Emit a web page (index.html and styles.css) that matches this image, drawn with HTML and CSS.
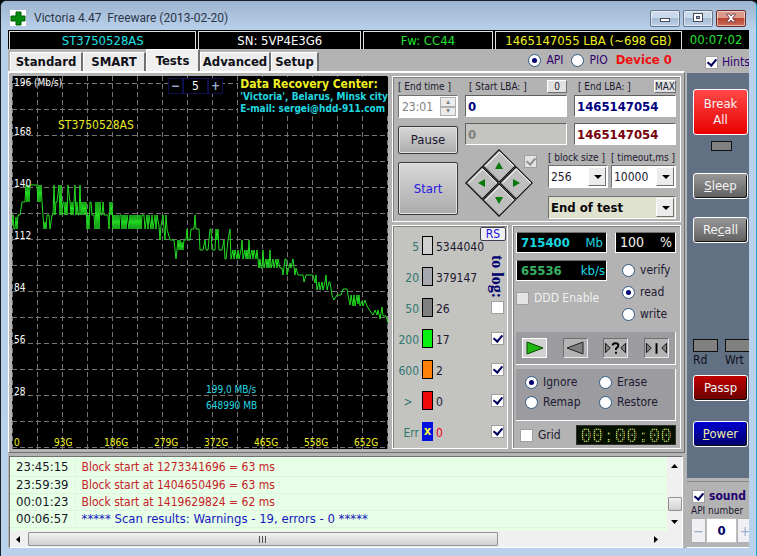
FILE: index.html
```html
<!DOCTYPE html>
<html lang="en">

<head>
    <meta charset="UTF-8">
    <meta name="viewport" content="width=device-width, initial-scale=1.0">
    <title>Victoria 4.47</title>
    <link rel="stylesheet" href="styles.css">
</head>

<body>
    <div class="window">
        <header class="titlebar">
            <svg class="logo" width="16" height="16" viewBox="0 0 16 16">
                <rect width="16" height="16" fill="#fff" />
                <path d="M6 2h5v4h4v5h-4v4H6v-4H1V6h5z" fill="#008a10" stroke="#005c00" />
            </svg>
            <h1>Victoria 4.47&nbsp; Freeware (2013-02-20)</h1>
            <div class="win-buttons">
                <button aria-label="Minimize">
                    <svg width="12" height="12" viewBox="0 0 12 12"><rect x="1.5" y="6.5" width="9" height="3" fill="#fff" stroke="#454a5a" /></svg>
                </button>
                <button aria-label="Maximize">
                    <svg width="12" height="12" viewBox="0 0 12 12"><rect x="1.5" y="1.5" width="9" height="8" fill="#fff" stroke="#454a5a" /><rect x="4.5" y="4.5" width="3" height="2" fill="#a9bdd6" stroke="#454a5a" /></svg>
                </button>
                <button class="close" aria-label="Close">
                    <svg width="12" height="12" viewBox="0 0 12 12"><path d="M1.500 2h3L6 4l1.500-2h3L7.500 6l3 4h-3L6 8l-1.500 2h-3l3-4z" fill="#fff" stroke="#5a3038" stroke-width=".8" /></svg>
                </button>
            </div>
        </header>

        <div class="info">
            <span class="cell cyan">ST3750528AS</span>
            <span class="cell">SN: 5VP4E3G6</span>
            <span class="cell green">Fw: CC44</span>
            <span class="cell yellow">1465147055 LBA (~698 GB)</span>
            <span class="clock">00:07:02</span>
        </div>

        <div class="main">
            <div class="left">
                <div class="tabs-row">
                    <nav class="tabs">
                        <button class="tab tab-standard">Standard</button>
                        <button class="tab tab-smart">SMART</button>
                        <button class="tab tab-tests active">Tests</button>
                        <button class="tab tab-advanced">Advanced</button>
                        <button class="tab tab-setup">Setup</button>
                    </nav>
                    <div class="mode">
                        <label><input type="radio" name="mode" checked>API</label>
                        <label><input type="radio" name="mode">PIO</label>
                        <strong>Device 0</strong>
                    </div>
                </div>

                <div class="page">
                    <section class="graph">
                        <svg class="plot" viewBox="0 0 376 373" preserveAspectRatio="none">
                            <g fill="none" stroke="#747474" stroke-dasharray="5 3">
                                <path d="M.5 0V373M25.500 0V373M50.500 0V373M75.500 0V373M100.500 0V373M125.500 0V373M150.500 0V373M175.500 0V373M200.500 0V373M225.500 0V373M250.500 0V373M275.500 0V373M300.500 0V373M325.500 0V373M350.500 0V373M375.500 0V373" />
                                <path d="M0 7.500H376M0 33.500H376M0 59.500H376M0 85.500H376M0 111.500H376M0 137.500H376M0 163.500H376M0 189.500H376M0 215.500H376M0 241.500H376M0 267.500H376M0 293.500H376M0 319.500H376M0 345.500H376M0 371.500H376" />
                            </g>
                            <polyline fill="none" stroke="#22dd22" points="0,150 1,139 2,153 3,153 4,141 5,153 6,139 8,139 10,126 13,126 14,109 15,126 16,109 17,126 18,109 25,109 26,126 27,109 28,126 29,109 30,126 32,153 33,146 34,153 35,139 37,139 38,153 40,139 41,139 42,109 43,139 44,126 45,126 46,118 47,109 48,139 49,109 50,139 51,126 52,126 53,139 54,126 55,139 56,109 58,126 59,139 60,126 61,139 62,126 63,109 64,139 65,126 66,139 67,139 68,109 69,139 70,126 71,139 72,126 73,139 74,126 75,153 76,139 77,153 78,126 79,126 80,139 82,139 83,153 84,126 85,153 86,126 87,153 88,126 89,139 90,139 91,126 92,139 96,139 97,153 98,126 99,139 100,126 101,153 102,139 103,153 104,139 105,153 106,139 107,153 108,139 109,139 110,153 111,139 112,153 113,139 114,153 115,139 117,153 118,139 119,153 120,139 121,153 122,139 123,153 124,139 125,153 126,139 127,153 128,139 129,153 130,139 132,139 133,153 135,139 136,153 137,139 139,153 140,139 141,153 143,139 144,153 145,139 147,150 148,164 149,150 151,139 152,153 153,164 154,139 155,153 158,164 162,164 164,183 166,164 167,174 168,164 169,174 170,166 171,174 172,164 174,164 175,153 176,164 178,164 179,153 182,153 183,139 184,153 187,153 188,174 191,174 193,164 194,174 196,174 198,153 199,153 200,174 203,174 204,153 205,164 206,153 207,174 210,174 212,164 213,183 214,183 216,164 218,153 219,183 221,174 222,183 223,174 225,183 226,174 227,183 229,174 230,164 231,183 233,174 234,183 235,174 236,183 237,164 238,183 240,174 241,183 242,174 244,183 245,174 247,192 248,183 249,192 250,192 251,174 252,192 254,183 255,192 256,183 257,192 258,174 259,192 261,183 262,192 264,183 265,192 266,183 268,192 270,192 271,199 273,183 274,183 275,199 278,187 279,192 281,183 283,199 284,192 286,199 291,199 292,206 294,199 301,199 303,207 304,199 305,214 307,206 308,214 310,206 311,214 313,206 314,199 315,214 317,206 318,206 320,219 322,224 325,219 329,219 331,213 335,213 336,219 338,229 339,219 341,230 342,219 343,230 345,219 346,228 347,219 348,230 350,225 351,230 353,224 355,230 358,235 361,239 363,234 365,239 366,234 368,243 370,231 371,240 374,240 376,247" />
                        </svg>
                        <div class="y-axis">
                            <span>196 (Mb/s)</span><span>168</span><span>140</span><span>112</span><span>84</span><span>56</span><span>28</span>
                        </div>
                        <div class="x-axis">
                            <span>0</span><span>93G</span><span>186G</span><span>279G</span><span>372G</span><span>465G</span><span>558G</span><span>652G</span>
                        </div>
                        <div class="model">ST3750528AS</div>
                        <div class="zoom-spin"><button>−</button><output>5</output><button>+</button></div>
                        <div class="promo">
                            <p class="promo-title">Data Recovery Center:</p>
                            <p>'Victoria', Belarus, Minsk city</p>
                            <p>E-mail: sergei@hdd-911.com</p>
                        </div>
                        <div class="cursor-info">199,0 MB/s<br>648990 MB</div>
                    </section>

                    <div class="controls">
                        <section class="panel scan">
                            <div class="scan-left">
                                <label class="cap" for="end-time">[ End time ]</label>
                                <div class="time-box">
                                    <input id="end-time" type="text" value="23:01" disabled>
                                    <div class="ud"><button disabled>▴</button><button disabled>▾</button></div>
                                </div>
                                <button class="btn pause">Pause</button>
                                <button class="btn start">Start</button>
                            </div>
                            <div class="scan-right">
                                <div class="lba">
                                    <div>
                                        <div class="cap-row"><label class="cap" for="start-lba">[ Start LBA: ]</label><button class="mini">0</button></div>
                                        <input id="start-lba" class="field" type="text" value="0">
                                        <input class="field off" type="text" value="0" aria-label="Current start" disabled>
                                    </div>
                                    <div>
                                        <div class="cap-row"><label class="cap" for="end-lba">[ End LBA: ]</label><button class="mini">MAX</button></div>
                                        <input id="end-lba" class="field" type="text" value="1465147054">
                                        <input class="field maroon" type="text" value="1465147054" aria-label="Current LBA">
                                    </div>
                                </div>
                                <div class="scan-bottom">
                                    <div class="nav">
                                        <button aria-label="Up"><svg width="8" height="8" viewBox="0 0 8 8"><path d="M4 0l4 7H0z" /></svg></button>
                                        <button aria-label="Right"><svg width="8" height="8" viewBox="0 0 8 8"><path d="M8 4L1 8V0z" /></svg></button>
                                        <button aria-label="Left"><svg width="8" height="8" viewBox="0 0 8 8"><path d="M0 4l7-4v8z" /></svg></button>
                                        <button aria-label="Down"><svg width="8" height="8" viewBox="0 0 8 8"><path d="M4 8L0 1h8z" /></svg></button>
                                    </div>
                                    <input class="nav-check" type="checkbox" aria-label="Lock" checked disabled>
                                    <div class="options">
                                        <div>
                                            <label class="cap" for="block">[ block size ]</label>
                                            <div class="select"><select id="block"><option>256</option></select></div>
                                        </div>
                                        <div>
                                            <label class="cap" for="timeout">[ timeout,ms ]</label>
                                            <div class="select"><select id="timeout"><option>10000</option></select></div>
                                        </div>
                                        <div class="select wide"><select aria-label="After test"><option>End of test</option></select></div>
                                    </div>
                                </div>
                            </div>
                        </section>

                        <section class="panel stats">
                            <div class="side">
                                <button class="rs">RS</button>
                                <span class="to-log">to log:</span>
                            </div>
                            <div class="stat"><span>5</span><i class="bar b5"></i><b>5344040</b></div>
                            <div class="stat"><span>20</span><i class="bar b20"></i><b>379147</b></div>
                            <div class="stat"><span>50</span><i class="bar b50"></i><b>26</b><input type="checkbox" aria-label="Log 50 ms"></div>
                            <div class="stat"><span>200</span><i class="bar b200"></i><b>17</b><input type="checkbox" aria-label="Log 200 ms" checked></div>
                            <div class="stat"><span>600</span><i class="bar b600"></i><b>2</b><input type="checkbox" aria-label="Log 600 ms" checked></div>
                            <div class="stat"><span class="gt">&gt;</span><i class="bar bover"></i><b>0</b><input type="checkbox" aria-label="Log slower" checked></div>
                            <div class="stat"><span>Err</span><i class="bar berr">x</i><b class="red">0</b><input type="checkbox" aria-label="Log errors" checked></div>
                        </section>

                        <section class="panel run">
                            <div class="run-top">
                                <div class="meters">
                                    <div class="lcd"><strong>715400</strong><span>Mb</span></div>
                                    <div class="lcd speed"><strong>65536</strong><span>kb/s</span></div>
                                    <label class="ddd"><input type="checkbox" disabled>DDD Enable</label>
                                </div>
                                <div class="ops">
                                    <div class="lcd percent"><span>100</span><span>%</span></div>
                                    <label><input type="radio" name="op">verify</label>
                                    <label><input type="radio" name="op" checked>read</label>
                                    <label><input type="radio" name="op">write</label>
                                </div>
                            </div>
                            <div class="player">
                                <button class="on" aria-label="Forward"><svg width="20" height="16" viewBox="0 0 20 16"><path d="M2 2l16 6-16 6z" fill="#20b810" stroke="#074a00" /></svg></button>
                                <button aria-label="Backward"><svg width="20" height="16" viewBox="0 0 20 16"><path d="M18 2L2 8l16 6z" fill="#808080" stroke="#222" /></svg></button>
                                <button aria-label="Random"><svg width="23" height="16" viewBox="0 0 24 16"><path d="M1.500 3l5 5-5 5zM22.500 3l-5 5 5 5z" fill="#808080" stroke="#111" /><path d="M9 5.500Q9 3 12 3q3 0 3 2.500Q15 7 12.500 8.500V10M12.500 12v2" fill="none" stroke="#000" stroke-width="2" /></svg></button>
                                <button aria-label="Butterfly"><svg width="23" height="16" viewBox="0 0 24 16"><path d="M1.500 3l5 5-5 5zM22.500 3l-5 5 5 5z" fill="#808080" stroke="#111" /><path d="M12 3v11" stroke="#000" stroke-width="2" /></svg></button>
                            </div>
                            <div class="actions">
                                <label><input type="radio" name="action" checked>Ignore</label>
                                <label><input type="radio" name="action">Erase</label>
                                <label><input type="radio" name="action">Remap</label>
                                <label><input type="radio" name="action">Restore</label>
                            </div>
                            <div class="run-foot">
                                <label><input type="checkbox">Grid</label>
                                <div class="dots">00:00:00</div>
                            </div>
                        </section>
                    </div>
                </div>

                <div class="log">
                    <div class="log-body">
                        <table>
                            <tr><td>23:45:15</td><td>Block start at 1273341696 = 63 ms</td></tr>
                            <tr><td>23:59:39</td><td>Block start at 1404650496 = 63 ms</td></tr>
                            <tr><td>00:01:23</td><td>Block start at 1419629824 = 62 ms</td></tr>
                            <tr><td>00:06:57</td><td class="result">***** Scan results: Warnings - 19, errors - 0 *****</td></tr>
                        </table>
                        <div class="vscroll">
                            <svg width="7" height="4" viewBox="0 0 7 4"><path d="M0 4l3.500-4L7 4z" /></svg>
                            <span class="thumb"></span>
                            <svg width="7" height="4" viewBox="0 0 7 4"><path d="M0 0l3.500 4L7 0z" /></svg>
                        </div>
                    </div>
                    <div class="hscroll">
                        <svg width="4" height="7" viewBox="0 0 4 7"><path d="M4 0L0 3.500 4 7z" /></svg>
                        <div class="track"><span class="thumb"><svg width="8" height="7" viewBox="0 0 8 7"><path d="M.5 0v7M3.500 0v7M6.500 0v7" stroke="#505050" /></svg></span></div>
                        <svg width="4" height="7" viewBox="0 0 4 7"><path d="M0 0l4 3.500L0 7z" /></svg>
                    </div>
                </div>
            </div>

            <aside class="right">
                <label class="hints"><input type="checkbox" checked>Hints</label>
                <div class="power-panel">
                    <button class="key break">Break<br>All</button>
                    <span class="led"></span>
                    <button class="key sleep"><u>S</u>leep</button>
                    <button class="key recall">Re<u>c</u>all</button>
                    <div class="leds"><div><span class="led"></span>Rd</div><div><span class="led"></span>Wrt</div></div>
                    <button class="key passp">Passp</button>
                    <button class="key power"><u>P</u>ower</button>
                </div>
                <div class="sound-panel">
                    <label class="sound"><input type="checkbox" checked>sound</label>
                    <label class="api" for="api-number">API number</label>
                    <div class="api-spin"><button>−</button><input id="api-number" type="text" value="0"><button>+</button></div>
                </div>
            </aside>
        </div>
    </div>
</body>

</html>
```
FILE: styles.css
```css
* {
    box-sizing: border-box;
}

body {
    margin: 0;
    background: #000;
    font: 12px/16px "DejaVu Sans Condensed", "Noto Sans", sans-serif;
    color: #201830;
}

button,
input,
select {
    font: inherit;
    color: inherit;
    margin: 0;
    padding: 0;
}

p {
    margin: 0;
}

.window {
    min-height: 100vh;
    display: flex;
    flex-direction: column;
    padding: 0 7px 8px;
    border: 1px solid #182028;
    border-right-color: #20a8c8;
    border-bottom-color: #20a8c8;
    border-radius: 6px 6px 0 0;
    background: linear-gradient(#9db4d0, #b9d0ea 28px, #b9d1ea);
}

/* title bar */
.titlebar {
    display: flex;
    align-items: center;
    height: 29px;
    padding: 5px 3px 0 2px;
}

.titlebar h1 {
    margin: 0;
    flex: 1;
    padding-left: 8px;
    font: 12px/16px Roboto, "Noto Sans", sans-serif;
    color: #2c3648;
}

.win-buttons {
    display: flex;
    gap: 3px;
}

.win-buttons button {
    width: 30px;
    height: 17px;
    display: flex;
    align-items: center;
    justify-content: center;
    border: 1px solid #66758c;
    border-radius: 2px;
    background: linear-gradient(#cbdaeb 45%, #a6bbd4 50%, #bdd0e6);
    box-shadow: inset 0 0 0 1px rgba(255, 255, 255, 0.5);
}

.win-buttons .close {
    border-color: #6b2a2a;
    background: linear-gradient(#dc9a8c 45%, #bc4432 50%, #c8705c);
}

/* drive info */
.info {
    display: grid;
    grid-template-columns: 188fr 163fr 130fr 188fr 64fr;
    gap: 2px;
    height: 19px;
    padding: 1px;
    background: #000;
    color: #fff;
    text-align: center;
    font-size: 13px;
    line-height: 17px;
    white-space: nowrap;
}

.cell {
    border: 1px solid #e0e0e0;
}

.cyan {
    color: #20e0e8;
}

.green,
.clock {
    color: #20e030;
}

.yellow {
    color: #f0f020;
}

.main {
    flex: 1;
    display: grid;
    grid-template-columns: minmax(0, 1fr) 62px;
    gap: 2px;
    background: #b3b3b3;
}

.left {
    display: flex;
    flex-direction: column;
    min-width: 0;
}

/* tabs */
.tabs-row {
    display: flex;
    justify-content: space-between;
    height: 22px;
}

.tabs {
    display: flex;
    align-items: flex-end;
    padding-left: 2px;
}

.tab {
    height: 19px;
    border: 1px solid #fff;
    border-right: 2px solid #707070;
    border-bottom: 0;
    background: #ececec;
    color: #101018;
    font-size: 13px;
    font-weight: bold;
    line-height: 16px;
    white-space: nowrap;
}

.tab-standard {
    width: 73px;
}

.tab-smart {
    width: 63px;
}

.tab-tests {
    width: 54px;
}

.tab-advanced {
    width: 71px;
}

.tab-setup {
    width: 48px;
}

.tab.active {
    height: 22px;
    background: #f0f0f0;
}

.mode {
    display: flex;
    align-items: center;
    gap: 8px;
    padding-right: 13px;
    color: #300070;
}

.mode strong {
    color: #f01010;
    font-size: 13px;
}

label {
    display: flex;
    align-items: center;
    gap: 5px;
    white-space: nowrap;
}

input[type="radio"],
input[type="checkbox"] {
    appearance: none;
    flex: none;
    display: grid;
    place-items: center;
    width: 13px;
    height: 13px;
    background: #fff;
    border: 1px solid #a0a0a0;
}

input[type="radio"] {
    border-color: #305880;
    border-radius: 50%;
}

input[type="radio"]:checked::after {
    content: "";
    width: 5px;
    height: 5px;
    border-radius: 50%;
    background: #000070;
}

input[type="checkbox"]:checked::after {
    content: "";
    width: 4px;
    height: 7px;
    margin-bottom: 2px;
    border: solid #000060;
    border-width: 0 2px 2px 0;
    transform: rotate(40deg);
}

input[type="checkbox"]:disabled {
    background: #e4e4e4;
}

input[type="checkbox"]:disabled::after {
    border-color: #909090;
}

.page {
    flex: 1;
    display: flex;
    gap: 4px;
    padding: 3px;
    border: 1px solid #fff;
    border-top-width: 2px;
    border-right-color: #707070;
    border-bottom-color: #707070;
}

/* surface graph */
.graph {
    position: relative;
    flex: 1;
    min-height: 373px;
    background: #000;
    overflow: hidden;
}

.plot {
    position: absolute;
    width: 100%;
    height: 100%;
}

.y-axis {
    position: absolute;
    top: 0;
    left: 2px;
    display: grid;
    grid-template-rows: 49px;
    grid-auto-rows: 52px;
    font-size: 10px;
    line-height: 13px;
    color: #fff;
}

.x-axis {
    position: absolute;
    left: 2px;
    right: 0;
    bottom: 0;
    display: grid;
    grid-template-columns: 40fr repeat(6, 50fr) 34fr;
    font-size: 10px;
    line-height: 13px;
    color: #f0f020;
}

.model {
    position: absolute;
    top: 41px;
    left: 46px;
    color: #e8e820;
}

.zoom-spin {
    position: absolute;
    top: 2px;
    left: 156px;
    display: grid;
    grid-template-columns: 15px 25px 15px;
    text-align: center;
    color: #fff;
    background: #000;
}

.zoom-spin button,
.zoom-spin output {
    height: 16px;
    line-height: 14px;
    border: 1px solid #101050;
    background: #000;
}

.zoom-spin button {
    color: #a0b0d8;
    font-weight: bold;
}

.promo {
    position: absolute;
    top: 1px;
    right: 0;
    padding-left: 2px;
    background: #000;
    color: #20d8e0;
    font-size: 10px;
    line-height: 12px;
    font-weight: bold;
    white-space: nowrap;
}

.promo .promo-title {
    font-size: 12px;
    line-height: 14px;
    color: #f0f020;
}

.cursor-info {
    position: absolute;
    left: 194px;
    top: 306px;
    font-size: 10px;
    color: #20d8e0;
}

/* right-hand controls */
.controls {
    flex: none;
    display: grid;
    grid-template-columns: 116px 169px;
    grid-template-rows: 146px 1fr;
    gap: 3px 4px;
}

.panel {
    border: 1px solid #fff;
    box-shadow: inset 1px 1px #808080;
    min-width: 0;
}

.scan {
    grid-column: 1 / 3;
    display: flex;
    gap: 7px;
    padding: 3px 4px 3px 5px;
}

.cap {
    display: block;
    height: 14px;
    font-size: 10px;
    line-height: 14px;
}

.scan-left {
    width: 60px;
    display: flex;
    flex-direction: column;
}

.time-box {
    display: flex;
    height: 23px;
    margin: 1px 0 8px;
    padding: 1px;
    background: #fff;
    border: 1px solid #707070;
    border-color: #707070 #fff #fff #707070;
}

.time-box input {
    width: 40px;
    padding-left: 2px;
    border: 0;
    background: none;
    color: #808080;
}

.ud {
    display: grid;
    grid-template-rows: 1fr 1fr;
    width: 16px;
}

.ud button {
    border: 1px solid #b0b0b0;
    background: #ececec;
    color: #808080;
    font-size: 8px;
    line-height: 6px;
}

.btn {
    border: 1px solid #383838;
    border-radius: 2px;
    background: linear-gradient(#d8d8d8, #ababab);
    box-shadow: inset 0 0 0 1px #e4e4e4;
    font-size: 13px;
}

.pause {
    height: 28px;
    margin-bottom: 8px;
}

.start {
    height: 53px;
    color: #2818e0;
}

.scan-right {
    flex: 1;
    min-width: 0;
}

.lba {
    display: grid;
    grid-template-columns: 1fr 1fr;
    gap: 7px;
}

.cap-row {
    display: flex;
    justify-content: space-between;
    padding-left: 4px;
}

.mini {
    height: 13px;
    min-width: 20px;
    border: 1px solid #fff;
    border-right-color: #707070;
    border-bottom-color: #707070;
    background: #e0e0e0;
    font-size: 10px;
    line-height: 11px;
}

.field {
    display: block;
    width: 100%;
    height: 22px;
    margin: 1px 0 6px;
    padding: 0 2px;
    border: 1px solid #606060;
    border-color: #606060 #fff #fff #606060;
    background: #fff;
    color: #000080;
    font-size: 13px;
    font-weight: bold;
}

.field.off {
    background: #c4c4c0;
    color: #808080;
}

.field.maroon {
    color: #780008;
}

.scan-bottom {
    display: flex;
    justify-content: space-between;
    position: relative;
}

.nav {
    display: grid;
    grid-template: 24px 24px / 24px 24px;
    width: 48px;
    height: 48px;
    margin: 8px 0 0 10px;
    transform: rotate(45deg);
}

.nav button {
    display: grid;
    place-items: center;
    border: 1px solid #000;
    background: #bebebe;
    box-shadow: inset 1px -1px #808080, inset 2px 1px #fff;
}

.nav svg {
    transform: rotate(-45deg);
    fill: #087808;
}

.nav-check {
    position: absolute;
    top: 4px;
    left: 59px;
}

.options {
    display: grid;
    grid-template-columns: 60px 65px;
    gap: 8px 3px;
}

.select {
    position: relative;
    height: 23px;
    border: 1px solid #707070;
    border-color: #707070 #fff #fff #707070;
    background: #fff;
}

.select.wide {
    grid-column: 1 / 3;
    background: #e0e2d0;
    font-size: 13px;
    font-weight: bold;
    color: #080808;
}

.select select {
    appearance: none;
    width: 100%;
    height: 100%;
    padding-left: 2px;
    border: 0;
    background: none;
}

.select::before {
    content: "";
    position: absolute;
    right: 1px;
    top: 1px;
    bottom: 1px;
    width: 16px;
    background: #ececec;
    border: 1px solid #fff;
    border-color: #fff #707070 #707070 #fff;
}

.select::after {
    content: "";
    position: absolute;
    right: 5px;
    top: 9px;
    border: 4px solid transparent;
    border-top-color: #000;
    border-bottom: 0;
}

/* block timing counters */
.stats {
    position: relative;
    display: grid;
    grid-template-rows: repeat(7, 31px);
    padding: 4px 3px 0 4px;
    background: #c3c3c0;
}

.stat {
    display: grid;
    grid-template-columns: 22px 11px 1fr 13px;
    gap: 3px;
    align-items: center;
    height: 31px;
}

.stat span,
.stat b {
    padding-top: 3px;
}

.stat span {
    text-align: right;
    color: #307870;
}

.stat .gt {
    text-align: center;
}

.stat b {
    font-weight: normal;
}

.stat .red {
    color: #f00020;
}

.bar {
    height: 19px;
    border: 1px solid #000;
}

.b5 {
    background: #d0d0d0;
}

.b20 {
    background: #a8a8b0;
}

.b50 {
    background: #808080;
}

.b200 {
    background: #08f010;
}

.b600 {
    background: #ff8008;
}

.bover {
    background: #f00808;
}

.berr {
    border-color: #0010e0;
    background: #0010e0;
    color: #f0f040;
    font: bold 13px/16px "DejaVu Sans Condensed", sans-serif;
    text-align: center;
}

.side {
    position: absolute;
    top: 1px;
    right: 1px;
    display: flex;
    flex-direction: column;
    align-items: center;
    gap: 14px;
}

.rs {
    width: 26px;
    height: 14px;
    border: 1px solid #404050;
    border-radius: 2px;
    background: #f0f0f4;
    color: #2010e0;
    line-height: 12px;
}

.to-log {
    writing-mode: vertical-rl;
    margin-left: 8px;
    font: bold 16px/14px "Liberation Serif", serif;
    color: #000070;
}

/* run panel */
.run {
    display: flex;
    flex-direction: column;
    gap: 4px;
    padding: 6px 4px 3px 3px;
}

.run-top {
    flex: 1;
    display: flex;
    justify-content: space-between;
}

.meters {
    width: 91px;
    display: flex;
    flex-direction: column;
    gap: 7px;
}

.lcd {
    display: flex;
    justify-content: space-between;
    height: 21px;
    padding: 0 3px 0 4px;
    border: 1px solid #fff;
    border-top-color: #707070;
    background: #000;
    color: #18d8e0;
    font-size: 13px;
    line-height: 19px;
}

.lcd.speed strong {
    color: #38b060;
}

.lcd.speed {
    padding-right: 1px;
}

.ddd {
    margin-top: 2px;
    color: #f0f0f0;
}

.ops {
    width: 61px;
    display: flex;
    flex-direction: column;
    gap: 6px;
}

.ops .lcd {
    margin-bottom: 3px;
    color: #f0f0f0;
}

.ops .lcd span {
    font-size: 14px;
}

.ops label {
    padding-left: 7px;
}

.player {
    display: flex;
    justify-content: space-between;
    padding: 6px;
    background: #9c9ca0;
    border: solid #fff;
    border-width: 0 1px 1px 0;
}

.player button {
    display: grid;
    place-items: center;
    width: 25px;
    height: 20px;
    border: 1px solid #e8e8e8;
    border-top-color: #707070;
    border-left-color: #707070;
    background: #b4b4b4;
}

.player .on {
    border-color: #fff;
    background: #d0d0d0;
}

.actions {
    display: grid;
    grid-template-columns: 74px 1fr;
    gap: 4px 0;
    padding: 5px 0 10px 9px;
    background: #9c9ca0;
    border: solid #fff;
    border-width: 0 1px 1px 0;
}

.run-foot {
    display: flex;
    justify-content: space-between;
    padding-left: 4px;
}

.dots {
    width: 100px;
    height: 20px;
    position: relative;
    background: #081000;
    color: #d0d868;
    border: 1px solid #303030;
    font: 19px/18px "DejaVu Sans Mono", monospace;
    text-align: center;
}

/* dot matrix mask */
.dots::after {
    content: "";
    position: absolute;
    inset: 0;
    background: repeating-linear-gradient(rgba(0, 16, 0, 0.6) 0 1px, transparent 1px 2px), repeating-linear-gradient(90deg, rgba(0, 16, 0, 0.6) 0 1px, transparent 1px 2px);
}

/* log */
.log {
    margin: 3px 2px 0 1px;
    border: 1px solid #707070;
    border-right-color: #fff;
    border-bottom-color: #fff;
    background: #f0f0f0;
}

.log-body {
    display: flex;
    height: 74px;
    background: #e6ffe6;
}

.log table {
    flex: 1;
    margin-top: 2px;
    border-collapse: collapse;
    height: 68px;
}

.log td {
    height: 17px;
    padding: 0 6px;
    border-bottom: 1px solid #def4de;
    color: #c82028;
    line-height: 16px;
}

.log td:first-child {
    width: 65px;
    border-right: 1px solid #def4de;
    color: #181828;
    font-size: 13px;
}

.log td.result {
    color: #1818c0;
    font-size: 13px;
}

.vscroll {
    display: flex;
    flex-direction: column;
    align-items: center;
    justify-content: space-between;
    width: 15px;
    padding: 7px 0;
    background: #f0f0f0;
}

.vscroll .thumb {
    margin-top: 20px;
    width: 14px;
    height: 14px;
}

.thumb {
    border: 1px solid #909090;
    border-radius: 1px;
    background: linear-gradient(#f2f2f2, #d0d0d0);
}

.hscroll {
    display: flex;
    align-items: center;
    gap: 8px;
    height: 16px;
    padding: 0 24px 0 6px;
}

.track {
    flex: 1;
}

.track .thumb {
    display: grid;
    place-items: center;
    width: 76%;
    height: 14px;
}

/* side column */
.right {
    display: flex;
    flex-direction: column;
    overflow: hidden;
}

.hints {
    gap: 4px;
    height: 24px;
    padding: 2px 0 0 18px;
    color: #300070;
}

.power-panel {
    flex: 1;
    display: flex;
    flex-direction: column;
    align-items: flex-start;
    padding: 16px 0 0 6px;
    background: #617083;
}

.key {
    width: 55px;
    height: 26px;
    border: 1px solid #fff;
    border-radius: 3px;
    background: linear-gradient(#989898, #606060);
    box-shadow: inset -1px -1px #101010;
    color: #f4f4f4;
    font-size: 13px;
    line-height: 16px;
}

.key.break {
    height: 46px;
    background: linear-gradient(#ff4848, #e80000);
    box-shadow: none;
}

.led {
    width: 21px;
    height: 10px;
    border: 1px solid #101010;
    background: #808080;
}

.power-panel > .led {
    margin: 6px 0 22px 18px;
}

.sleep {
    margin-bottom: 18px;
}

.recall {
    margin-bottom: 96px;
}

.leds {
    display: flex;
    gap: 7px;
    margin-bottom: 7px;
}

.leds div {
    color: #101020;
    text-indent: 2px;
    line-height: 16px;
}

.leds .led {
    display: block;
    width: 25px;
    height: 13px;
}

.passp {
    background: linear-gradient(#c00000, #680000);
    margin-bottom: 20px;
}

.power {
    background: linear-gradient(#0000d0, #000068);
    color: #f0f0a0;
}

.sound-panel {
    margin-top: 3px;
    padding: 6px 0 4px 4px;
    border-top: 1px solid #888;
    border-bottom: 1px solid #fff;
}

.sound {
    gap: 4px;
    padding-left: 1px;
    font-size: 12px;
    font-weight: bold;
    color: #200070;
}

.api {
    font-size: 10px;
    line-height: 14px;
}

.api-spin {
    display: grid;
    grid-template-columns: 15px 31px 16px;
    height: 25px;
}

.api-spin button {
    border: 1px solid #b0b0b0;
    background: #f0f0f4;
    color: #98b0d0;
    font-size: 14px;
}

.api-spin input {
    width: 100%;
    border: 1px solid #c0c0c0;
    text-align: center;
    font-size: 13px;
    font-weight: bold;
    color: #000060;
}
```
